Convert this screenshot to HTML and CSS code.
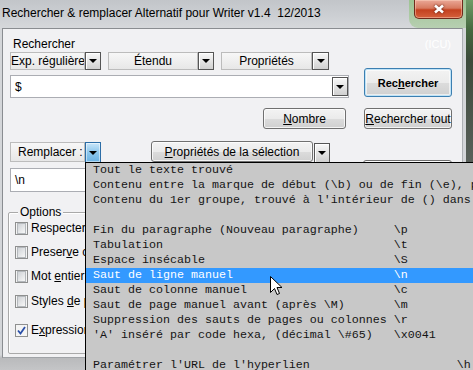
FILE: index.html
```html
<!DOCTYPE html>
<html lang="fr">
<head>
<meta charset="utf-8">
<title>Rechercher &amp; remplacer Alternatif</title>
<link rel="stylesheet" href="styles.css">
</head>
<body>
<div class="screen">
  <div class="window">
    <div class="titlebar">
      <span class="title">Rechercher &amp; remplacer Alternatif pour Writer v1.4&nbsp; 12/2013</span>
      <div class="glow">
        <div class="close">
          <svg width="12" height="10" viewBox="0 0 12 10"><path d="M2 1.5 L10 8.5 M10 1.5 L2 8.5" stroke="#fff" stroke-width="2.6"/></svg>
        </div>
      </div>
    </div>
    <div class="panel">
      <div class="head"><span>Rechercher</span><span class="icu">(ICU)</span></div>
      <div class="search">
        <div class="search-left">
          <div class="combos">
            <div class="combo"><div class="cbox c1">Exp. régulières</div><div class="dd"><i class="tri"></i></div></div>
            <div class="combo"><div class="cbox c2">Étendu</div><div class="dd"><i class="tri"></i></div></div>
            <div class="combo"><div class="cbox c3">Propriétés</div><div class="dd w17"><i class="tri"></i></div></div>
          </div>
          <div class="field"><span>$</span><div class="dd in"><i class="tri"></i></div></div>
        </div>
        <div class="btn default">Rec<u>h</u>ercher</div>
      </div>
      <div class="row3">
        <div class="btn nombre"><u>N</u>ombre</div>
        <div class="btn tout"><u>R</u>echercher tout</div>
      </div>
      <div class="row4">
        <div class="rbox">Remplacer :</div>
        <div class="dd hot"><i class="tri"></i></div>
        <div class="btn psel"><u>P</u>ropriétés de la sélection</div>
        <div class="dd pdd"><i class="tri"></i></div>
        <div class="btn hidden-btn">Remplacer</div>
      </div>
      <div class="field field2"><span>\n</span></div>
      <div class="group">
        <div class="legend">Options</div>
        <div class="cb r1"><span class="box"></span><span>Respecter la casse</span></div>
        <div class="cb r2"><span class="box"></span><span>Preser<u>v</u>e case</span></div>
        <div class="cb r3"><span class="box"></span><span>Mot <u>e</u>ntier seulement</span></div>
        <div class="cb r4"><span class="box"></span><span>Styles <u>d</u>e paragraphe</span></div>
        <div class="cb r5"><span class="box checked"><svg width="9" height="9" viewBox="0 0 9 9"><path d="M1 4.5 L3.5 7.5 L8 1" fill="none" stroke="#2a4fa8" stroke-width="1.8"/></svg></span><span>E<u>x</u>pressions régulières</span></div>
      </div>
    </div>
  </div>
  <div class="edge"></div>

  <div class="list">
    <div class="item">Tout le texte trouvé</div>
    <div class="item">Contenu entre la marque de début (\b) ou de fin (\e), pas inclus</div>
    <div class="item">Contenu du 1er groupe, trouvé à l'intérieur de () dans la recherche</div>
    <div class="item"> </div>
    <div class="item">Fin du paragraphe (Nouveau paragraphe)     \p</div>
    <div class="item">Tabulation                                 \t</div>
    <div class="item">Espace insécable                           \S</div>
    <div class="item sel">Saut de ligne manuel                       \n</div>
    <div class="item">Saut de colonne manuel                     \c</div>
    <div class="item">Saut de page manuel avant (après \M)       \m</div>
    <div class="item">Suppression des sauts de pages ou colonnes \r</div>
    <div class="item">'A' inséré par code hexa, (décimal \#65)   \x0041</div>
    <div class="item"> </div>
    <div class="item">Paramétrer l'URL de l'hyperlien                     \h</div>
  </div>

  <svg class="cursor" width="13" height="20" viewBox="0 0 13 20">
    <path d="M0.5 0.5 L0.5 16.5 L4.5 12.5 L7 18.5 L9.5 17.5 L7 11.5 L12 11.5 Z" fill="#fff" stroke="#000" stroke-width="1"/>
  </svg>
</div>
</body>
</html>
```

FILE: styles.css
```css
* { box-sizing: border-box; }
html, body { margin: 0; padding: 0; }
body {
  font-family: "Liberation Sans", Arial, sans-serif;
  font-size: 12px;
  color: #000;
  background: #4f5f4c;
}
.screen {
  position: relative;
  width: 473px;
  height: 370px;
  overflow: hidden;
  display: flex;
}
.window {
  width: 466px;
  height: 370px;
  background: linear-gradient(#d4d6d9, #d4d6d9 355px, #b9babc 358px, #c4c5c7);
  display: flex;
  flex-direction: column;
}
.edge {
  width: 7px;
  height: 370px;
  background: linear-gradient(#6f9c68 0, #45683f 30px, #3c4a3a 60px, #59605a 160px, #4b524c 370px);
}
.titlebar {
  height: 28px;
  flex: none;
  display: flex;
  justify-content: space-between;
  align-items: flex-start;
  background: linear-gradient(#c2c5c9, #cdd0d4 60%, #d6d8db);
}
.title {
  padding: 6px 0 0 2px;
  line-height: 14px;
  white-space: nowrap;
}
.glow {
  width: 57px;
  height: 28px;
  display: flex;
  justify-content: flex-end;
  padding-right: 3px;
  background: linear-gradient(#9dc393, #b7cfb1);
  border-bottom-left-radius: 9px;
}
.close {
  width: 49px;
  height: 19px;
  border: 1px solid #6f2a1c;
  border-top: none;
  border-radius: 0 0 5px 5px;
  background: linear-gradient(#eaa897, #d77a60 45%, #c4411f 55%, #d5603c);
  display: flex;
  align-items: center;
  justify-content: center;
  box-shadow: inset 0 0 0 1px rgba(255,220,200,0.45);
}
.close svg { filter: drop-shadow(0 0 1px #5a1a0e); }

.panel {
  flex: none;
  margin: 0 3px 0 2px;
  height: 330px;
  background: #f1f1f3;
  border: 1px solid #8a8d91;
  border-right-color: #aeb1b5;
  border-bottom-color: #a0a3a7;
  padding-left: 7px;
}
.head {
  display: flex;
  justify-content: space-between;
  height: 23px;
  padding: 7px 11px 0 3px;
  line-height: 16px;
}
.icu {
  color: #ffffff;
  font-size: 11px;
}
.search { display: flex; height: 46px; }
.search-left { width: 339px; }
.combos { display: flex; gap: 7px; height: 18px; }
.combo { display: flex; }
.cbox {
  height: 18px;
  border: 1px solid #bcbcbc;
  background: linear-gradient(#f7f7f7, #e7e7e7);
  line-height: 16px;
  white-space: nowrap;
  overflow: hidden;
}
.c1 { width: 75px; }
.c2 { width: 90px; text-align: center; }
.c3 { width: 91px; text-align: center; }
.dd {
  flex: none;
  width: 16px;
  height: 18px;
  border: 1px solid #555;
  background: linear-gradient(#f8f8f8, #e2e2e2 55%, #d0d0d0);
  box-shadow: inset 1px 1px 0 #fff;
  display: flex;
  align-items: center;
  justify-content: center;
}
.dd.w17 { width: 17px; }
.tri {
  display: block;
  width: 0;
  height: 0;
  border-style: solid;
  border-width: 4px 4px 0;
  border-color: #000 transparent transparent;
}
.field {
  margin-top: 5px;
  height: 23px;
  border: 1px solid #abadb3;
  background: #fff;
  display: flex;
  align-items: center;
  justify-content: space-between;
  padding: 0 0 0 4px;
}
.dd.in { height: 19px; }

.btn {
  display: flex;
  align-items: center;
  justify-content: center;
  border: 1px solid #707070;
  border-radius: 3px;
  background: linear-gradient(#f3f3f3 0%, #ebebeb 50%, #dcdcdc 51%, #d0d0d0 100%);
  box-shadow: inset 0 0 0 1px rgba(255,255,255,0.75);
  white-space: nowrap;
}
.default {
  margin: 16px 0 0 15px;
  width: 88px;
  height: 29px;
  border-color: #3c7fb1;
  box-shadow: inset 0 0 0 1px #bfe3f7, inset 0 0 0 2px rgba(255,255,255,0.6);
  font-weight: bold;
  font-size: 11px;
}
.row3 {
  display: flex;
  margin-top: 10px;
  height: 21px;
  padding-left: 253px;
  gap: 18px;
}
.nombre { width: 83px; }
.tout { width: 88px; }

.row4 {
  display: flex;
  align-items: flex-start;
  margin-top: 12px;
  height: 22px;
}
.rbox {
  width: 75px;
  height: 20px;
  margin-top: 1px;
  border: 1px solid #bcbcbc;
  background: linear-gradient(#f7f7f7, #e7e7e7);
  line-height: 18px;
  padding-left: 7px;
}
.dd.hot {
  height: 21px;
  margin-top: 1px;
  border-color: #2c6da6;
  background: linear-gradient(#c9e6fa, #8cc6ec 50%, #6bb2e3);
  box-shadow: inset 0 0 0 1px rgba(255,255,255,0.5);
}
.psel {
  margin-left: 50px;
  width: 162px;
  height: 21px;
}
.pdd {
  margin: 2px 0 0 1px;
  height: 20px;
}
.hidden-btn {
  margin: 19px 0 0 33px;
  width: 89px;
  height: 22px;
}
.field2 {
  height: 24px;
  width: 339px;
}
.group {
  margin: 20px 0 0 -2px;
  width: 345px;
  height: 142px;
  border: 1px solid #a9a9a9;
  border-radius: 2px;
  box-shadow: inset 1px 1px 0 #fff;
}
.legend {
  width: fit-content;
  margin: -9px 0 0 9px;
  padding: 0 2px;
  line-height: 16px;
  background: #f1f1f3;
}
.cb {
  display: flex;
  align-items: center;
  gap: 3px;
  height: 13px;
  padding-left: 6px;
  white-space: nowrap;
  line-height: 13px;
}
.r1 { margin-top: 2px; }
.r2 { margin-top: 11px; }
.r3 { margin-top: 11px; }
.r4 { margin-top: 12px; }
.r5 { margin-top: 16px; }
.box {
  flex: none;
  width: 13px;
  height: 13px;
  border: 1px solid #8e8f8f;
  background: #f4f4f4;
  display: flex;
  align-items: center;
  justify-content: center;
  padding: 1px;
}
.box::after {
  content: "";
  display: block;
  width: 9px;
  height: 9px;
  border: 1px solid #b4b8bc;
  background: linear-gradient(135deg, #cfd2d6, #f7f7f7);
}
.box.checked::after { display: none; }

.list {
  position: absolute;
  left: 85px;
  top: 162px;
  right: 0;
  bottom: 0;
  background: #c8c8c8;
  border-top: 1px solid #000;
  border-left: 1px solid #000;
  font-family: "Liberation Mono", "Courier New", monospace;
  font-size: 11.67px;
  line-height: 15px;
  color: #141414;
  overflow: hidden;
}
.item { height: 15px; padding-left: 7px; white-space: pre; }
.item.sel { background: #3399ff; color: #fff; }
.cursor {
  position: absolute;
  left: 270px;
  top: 276px;
}
```
